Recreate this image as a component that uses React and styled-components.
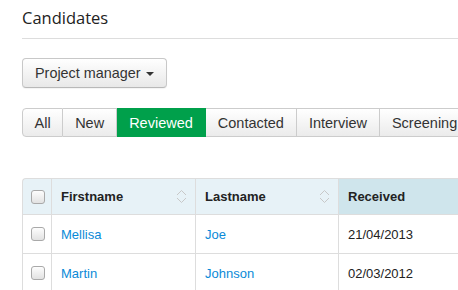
import React from 'react';
import styled, { createGlobalStyle } from 'styled-components';

const Global = createGlobalStyle`
  html, body { margin: 0; padding: 0; background: #fff; }
  body { font-family: "Liberation Sans", Arial, sans-serif; color: #333; }
`;

const Page = styled.div`
  width: 458px;
  height: 290px;
  overflow: hidden;
  padding-left: 22px;
  box-sizing: border-box;
`;

const Header = styled.div`
  height: 39px;
  border-bottom: 1px solid #dddddd;
  box-sizing: border-box;
  display: flex;
  align-items: flex-start;
`;

const Title = styled.h1`
  margin: 6px 0 0;
  font-family: "Open Sans", sans-serif;
  font-weight: 400;
  font-size: 16.5px;
  color: #222;
`;

const DropButton = styled.button`
  margin-top: 19px;
  height: 30px;
  padding: 0 12px;
  display: inline-flex;
  align-items: center;
  gap: 5px;
  font-family: "Liberation Sans", Arial, sans-serif;
  font-size: 14.4px;
  color: #333;
  background: linear-gradient(#ffffff, #e8e8e8);
  border: 1px solid #c8c8c8;
  border-bottom-color: #b8b8b8;
  border-radius: 4px;
  box-shadow: 0 1px 1px rgba(0,0,0,0.05);
`;

const Caret = styled.span`
  width: 0;
  height: 0;
  border-left: 4px solid transparent;
  border-right: 4px solid transparent;
  border-top: 4px solid #333;
  margin-top: 1px;
`;

const Tabs = styled.div`
  margin-top: 20px;
  display: flex;
  white-space: nowrap;
`;

const Tab = styled.div`
  height: 29px;
  box-sizing: border-box;
  padding: 0 ${({ $pad }) => $pad || 12}px;
  display: flex;
  align-items: center;
  font-size: 14.5px;
  color: ${({ $active }) => ($active ? '#fff' : '#333')};
  background: ${({ $active }) => ($active ? '#00a04b' : 'linear-gradient(#ffffff, #ebebeb)')};
  border: 1px solid ${({ $active }) => ($active ? '#00a04b' : '#cccccc')};
  border-left: ${({ $first }) => ($first ? '1px solid #cccccc' : 'none')};
  border-radius: ${({ $first }) => ($first ? '4px 0 0 4px' : '0')};
  flex-shrink: 0;
`;

const Table = styled.table`
  margin-top: 41px;
  border-collapse: separate;
  border-spacing: 0;
  width: 480px;
  table-layout: fixed;
  font-size: 13px;
`;

const Th = styled.th`
  height: 37px;
  box-sizing: border-box;
  text-align: left;
  font-weight: 700;
  padding: 0 0 0 9px;
  color: #222;
  background: ${({ $sorted }) => ($sorted ? '#cfe5ec' : '#e7f2f7')};
  border-top: 1px solid #dddddd;
  border-left: 1px solid #dddddd;
  border-bottom: 1px solid #dddddd;
  &:first-child { border-top-left-radius: 4px; }
`;

const Td = styled.td`
  height: 39px;
  box-sizing: border-box;
  padding: 0 0 0 9px;
  border-left: 1px solid #dddddd;
  border-bottom: 1px solid #dddddd;
  color: ${({ $link }) => ($link ? '#0a8ad8' : '#222')};
`;

const HeadInner = styled.div`
  display: flex;
  align-items: center;
  justify-content: space-between;
  padding-right: 8px;
`;

const Check = styled.span`
  display: block;
  width: 12px;
  height: 12px;
  margin-left: -1px;
  border: 1px solid #a9a9a9;
  border-radius: 3px;
  background: linear-gradient(#fdfdfd, #e2e2e2);
`;

const SortIcon = () => (
  <svg width="11" height="15" viewBox="0 0 11 15" fill="none" stroke="#c8c8c8" strokeWidth="1">
    <path d="M1 6 L5.5 1.5 L10 6" />
    <path d="M1 9 L5.5 13.5 L10 9" />
  </svg>
);

const rows = [
  { first: 'Mellisa', last: 'Joe', received: '21/04/2013' },
  { first: 'Martin', last: 'Johnson', received: '02/03/2012' },
];

const tabs = [
  { label: 'All', pad: 11.5 },
  { label: 'New' },
  { label: 'Reviewed', active: true },
  { label: 'Contacted' },
  { label: 'Interview' },
  { label: 'Screening' },
];

export default function App() {
  return (
    <Page>
      <Global />
      <Header>
        <Title>Candidates</Title>
      </Header>
      <DropButton>
        Project manager <Caret />
      </DropButton>
      <Tabs>
        {tabs.map((t, i) => (
          <Tab key={t.label} $active={t.active} $first={i === 0} $pad={t.pad}>
            {t.label}
          </Tab>
        ))}
      </Tabs>
      <Table>
        <colgroup>
          <col style={{ width: 29 }} />
          <col style={{ width: 144 }} />
          <col style={{ width: 143 }} />
          <col />
        </colgroup>
        <thead>
          <tr>
            <Th><Check /></Th>
            <Th><HeadInner>Firstname <SortIcon /></HeadInner></Th>
            <Th><HeadInner>Lastname <SortIcon /></HeadInner></Th>
            <Th $sorted>Received</Th>
          </tr>
        </thead>
        <tbody>
          {rows.map((r) => (
            <tr key={r.first}>
              <Td><Check /></Td>
              <Td $link>{r.first}</Td>
              <Td $link>{r.last}</Td>
              <Td>{r.received}</Td>
            </tr>
          ))}
        </tbody>
      </Table>
    </Page>
  );
}
